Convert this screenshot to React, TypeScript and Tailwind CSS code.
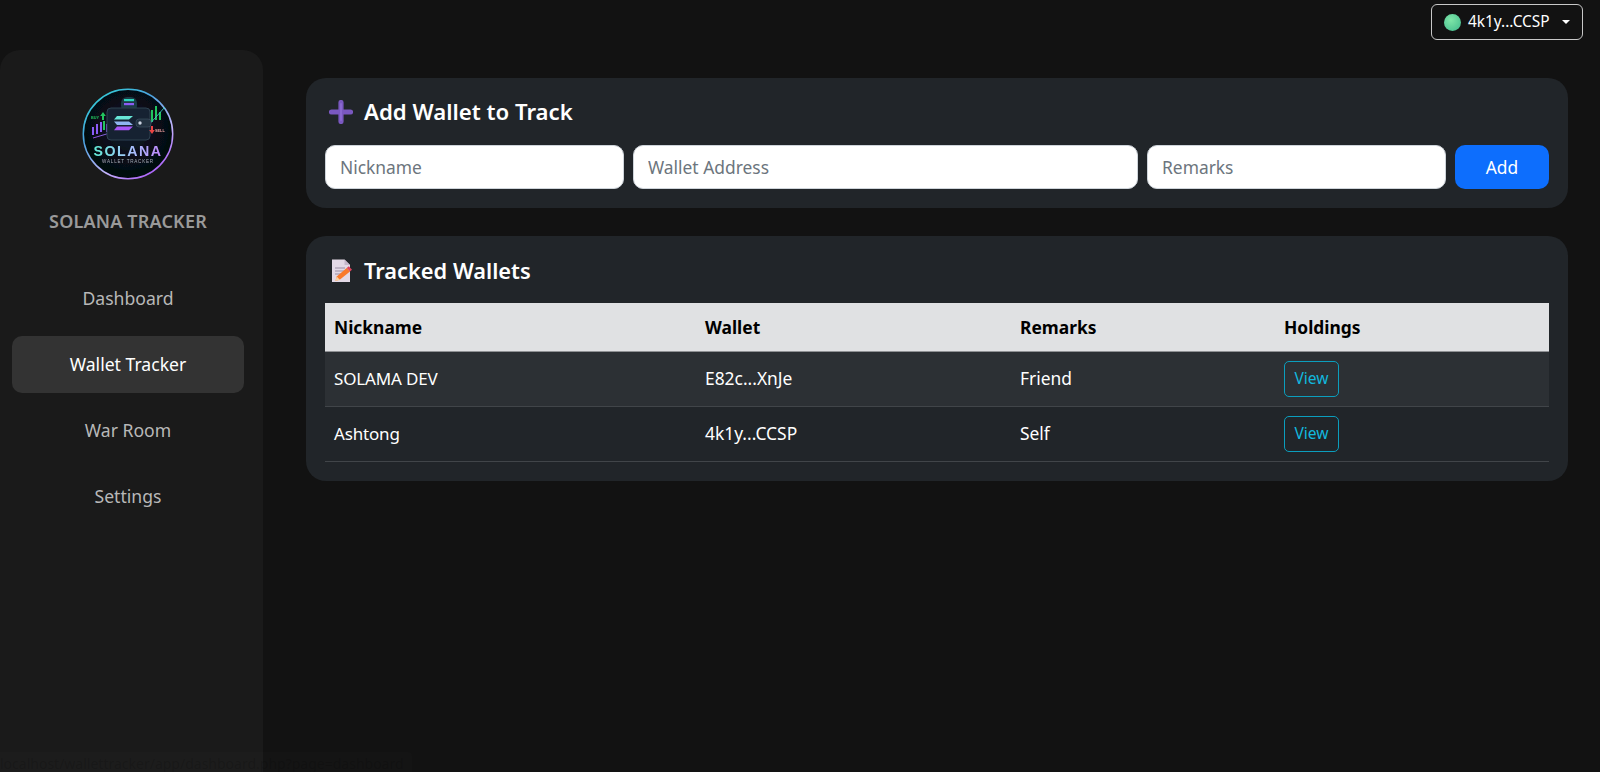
import React from "react";

const font = { fontFamily: '"Noto Sans", "Open Sans", sans-serif' };

function Logo() {
  return (
    <svg width="92" height="92" viewBox="0 0 92 92" className="block">
      <defs>
        <linearGradient id="ring" x1="0.1" y1="0" x2="0.8" y2="1">
          <stop offset="0" stopColor="#2dd4d4" />
          <stop offset="0.35" stopColor="#4aa3e0" />
          <stop offset="0.7" stopColor="#c4b5fd" />
          <stop offset="1" stopColor="#a855f7" />
        </linearGradient>
        <linearGradient id="sol" x1="0" y1="0" x2="1" y2="0">
          <stop offset="0" stopColor="#5eead4" />
          <stop offset="0.5" stopColor="#a5c8fc" />
          <stop offset="1" stopColor="#c084fc" />
        </linearGradient>
        <linearGradient id="line" x1="0" y1="1" x2="1" y2="0">
          <stop offset="0" stopColor="#a855f7" />
          <stop offset="1" stopColor="#2dd4bf" />
        </linearGradient>
        <radialGradient id="disc" cx="0.5" cy="0.45" r="0.55">
          <stop offset="0" stopColor="#0d1a2b" />
          <stop offset="1" stopColor="#04060c" />
        </radialGradient>
        <filter id="soft" x="-5%" y="-5%" width="110%" height="110%">
          <feGaussianBlur stdDeviation="0.3" />
        </filter>
      </defs>
      <g filter="url(#soft)">
        <circle cx="46" cy="46" r="44.7" fill="url(#disc)" stroke="url(#ring)" strokeWidth="1.5" />
        <rect x="39" y="9" width="16" height="15" rx="6" fill="#1b3a44" />
        <rect x="42" y="11" width="10" height="2.2" fill="#2dd4bf" />
        <rect x="42" y="15" width="10" height="2.2" fill="#8b5cf6" />
        <path d="M10 39h2v8h-2zM14 36h2v10h-2zM18 34h2v10h-2zM24 36h2v8h-2z" fill="#8b5cf6" />
        <path d="M21 33h2v9h-2z" fill="#22c55e" />
        <path d="M65 26h2v12h-2zM69 22h2v12h-2zM73 18h2v14h-2zM77 24h2v8h-2z" fill="#22c55e" />
        <path d="M61 30h2v10h-2z" fill="#7c3aed" />
        <path d="M11 50 L28 45 L40 48 L50 51 L64 40 L83 19" fill="none" stroke="url(#line)" strokeWidth="0.9" />
        <rect x="25" y="20" width="43" height="32" rx="4" fill="#172130" stroke="#2f4050" strokeWidth="1" />
        <rect x="54" y="31" width="15" height="8" rx="3" fill="#21303f" stroke="#3e5263" strokeWidth="0.7" />
        <circle cx="58" cy="35" r="1.7" fill="#cbd5e1" />
        <path d="M35 28h16l-4 3.6H32z" fill="#67e8d8" />
        <path d="M32 33.4h15l4 3.6H35z" fill="#8fb4f0" />
        <path d="M35 38.6h16l-4 3.6H32z" fill="#a855f7" />
        <text x="9" y="30.5" fontFamily="Liberation Sans, sans-serif" fontWeight="700" fontSize="3.8" fill="#22c55e">BUY</text>
        <path d="M20 32h2v-4h1.8l-2.8-4-2.8 4H20z" fill="#22c55e" />
        <path d="M69 38h2v4h1.8l-2.8 4-2.8-4H69z" fill="#ef4444" />
        <text x="73" y="43.5" fontFamily="Liberation Sans, sans-serif" fontWeight="700" fontSize="3.8" fill="#f3a3a3">SELL</text>
        <text x="46" y="68" textAnchor="middle" fontFamily="Liberation Sans, sans-serif" fontWeight="700" fontSize="14.2" letterSpacing="1.5" fill="url(#sol)">SOLANA</text>
        <text x="46" y="74.5" textAnchor="middle" fontFamily="Liberation Sans, sans-serif" fontSize="4.6" letterSpacing="0.75" fill="#a7adb8">WALLET TRACKER</text>
      </g>
    </svg>
  );
}

function PlusIcon() {
  return (
    <svg width="24" height="24" viewBox="0 0 24 24" className="shrink-0">
      <path d="M12 2.5v19M2.5 12h19" stroke="#7a58c0" strokeWidth="5.2" strokeLinecap="round" />
      <path d="M12 4v16" stroke="#8a68d0" strokeWidth="2" strokeLinecap="round" />
    </svg>
  );
}

function MemoIcon() {
  return (
    <svg width="24" height="24" viewBox="0 0 24 24" className="shrink-0">
      <path d="M3 0.5h12.5L21 6v17H3z" fill="#e3d9e6" />
      <path d="M15.5 0.5L21 6h-5.5z" fill="#c5b8cc" />
      <path d="M6 9h10M6 12h10M6 15h6" stroke="#b3a7bb" strokeWidth="1.4" />
      <path d="M6.5 22l1.2-4.5 10-8.5 3.3 3.5-10 8z" fill="#f97a2c" />
      <path d="M17.7 9l3.3 3.5 2-1.8-3.2-3.5z" fill="#e0455f" />
      <path d="M6.5 22l1.2-4.5 3.3 3.5z" fill="#f7d3a8" />
    </svg>
  );
}

const navItems = ["Dashboard", "Wallet Tracker", "War Room", "Settings"];

const rows = [
  { nick: "SOLAMA DEV", wallet: "E82c...XnJe", remarks: "Friend", bg: "bg-[#2c3034]" },
  { nick: "Ashtong", wallet: "4k1y...CCSP", remarks: "Self", bg: "bg-[#212529]" },
];

const inputClass =
  "h-[44px] rounded-[10px] border border-[#ced4da] bg-white px-[14px] text-[17.4px] text-[#212529] placeholder:text-[#6c757d]";

export default function App() {
  return (
    <div style={font} className="relative flex h-[772px] w-[1600px] flex-col overflow-hidden bg-[#121212] text-white">
      <div className="flex h-[50px] shrink-0 items-start justify-end pt-1 pr-[17px]">
        <button className="flex h-[36px] w-[152px] items-center rounded-md border border-[#c8c8c8] bg-[#121212] pl-[12px] text-[15.4px] text-white">
          <span className="h-[17px] w-[17px] rounded-full bg-[radial-gradient(circle_at_40%_35%,#7fe6a8,#3fb98c)]" />
          <span className="ml-[7px]">4k1y...CCSP</span>
          <span className="ml-[12px] h-0 w-0 border-x-[4px] border-t-[4px] border-x-transparent border-t-white" />
        </button>
      </div>

      <div className="flex min-h-0 flex-1">
        <aside className="flex w-[263px] shrink-0 flex-col items-center rounded-t-[20px] bg-[#1a1a1a] pt-[38px] pr-[19px] pl-3">
          <Logo />
          <div className="mt-[29px] text-[18px] leading-[24px] font-semibold tracking-[0.01em] text-[#9a9a9a]">SOLANA TRACKER</div>
          <nav className="mt-[37px] flex w-full flex-col gap-[9px]">
            {navItems.map((n) => (
              <div
                key={n}
                className={
                  "flex h-[57px] items-center justify-center rounded-[10px] text-[17.6px] " +
                  (n === "Wallet Tracker" ? "bg-[#333333] text-white" : "text-[#b8b8b8]")
                }
              >
                {n}
              </div>
            ))}
          </nav>
        </aside>

        <main className="flex min-w-0 flex-1 flex-col gap-[28px] pt-[28px] pr-[32px] pl-[43px]">
          <section className="rounded-[20px] bg-[#212529] px-[19px] pt-[18px] pb-[19px]">
            <h2 className="flex h-[32px] items-center gap-[11px] pl-[4px] text-[22.2px] font-semibold text-white">
              <PlusIcon />
              Add Wallet to Track
            </h2>
            <div className="mt-[17px] flex gap-[9px]">
              <input placeholder="Nickname" className={inputClass + " w-[299px]"} />
              <input placeholder="Wallet Address" className={inputClass + " min-w-0 flex-1"} />
              <input placeholder="Remarks" className={inputClass + " w-[299px]"} />
              <button className="h-[44px] w-[94px] rounded-[10px] bg-[#0d6efd] text-[17.4px] text-white">Add</button>
            </div>
          </section>

          <section className="rounded-[20px] bg-[#212529] px-[19px] pt-[19px] pb-[19px]">
            <h2 className="flex h-[32px] items-center gap-[11px] pl-[4px] text-[21.8px] font-semibold text-white">
              <MemoIcon />
              Tracked Wallets
            </h2>
            <table className="mt-[16px] w-[1224px] table-fixed border-collapse text-left text-[17.4px]">
              <colgroup>
                <col className="w-[371px]" />
                <col className="w-[315px]" />
                <col className="w-[264px]" />
                <col className="w-[274px]" />
              </colgroup>
              <thead>
                <tr className="h-[48px] border-b border-[#8f9194] bg-[#e0e1e3] text-black">
                  {["Nickname", "Wallet", "Remarks", "Holdings"].map((h) => (
                    <th key={h} className="px-[9px] font-bold">{h}</th>
                  ))}
                </tr>
              </thead>
              <tbody>
                {rows.map((r) => (
                  <tr key={r.nick} className={"h-[55px] border-b border-[#414549] text-white " + r.bg}>
                    <td className="px-[9px]"><span className="text-[17px] tracking-[-0.01em]">{r.nick}</span></td>
                    <td className="px-[9px]">{r.wallet}</td>
                    <td className="px-[9px]">{r.remarks}</td>
                    <td className="px-[9px]">
                      <button className="h-[36px] w-[55px] rounded-[5px] border border-[#0b9ebd] text-[15.6px] text-[#12b8de]">View</button>
                    </td>
                  </tr>
                ))}
              </tbody>
            </table>
          </section>
        </main>
      </div>

      <div className="absolute bottom-0 left-0 h-[20px] w-[412px] overflow-hidden rounded-tr-[4px] bg-white/[0.012] text-[14px] leading-[24px] whitespace-nowrap text-black/15">
        localhost/wallettracker/app/dashboard.php?page=dashboard
      </div>
    </div>
  );
}
